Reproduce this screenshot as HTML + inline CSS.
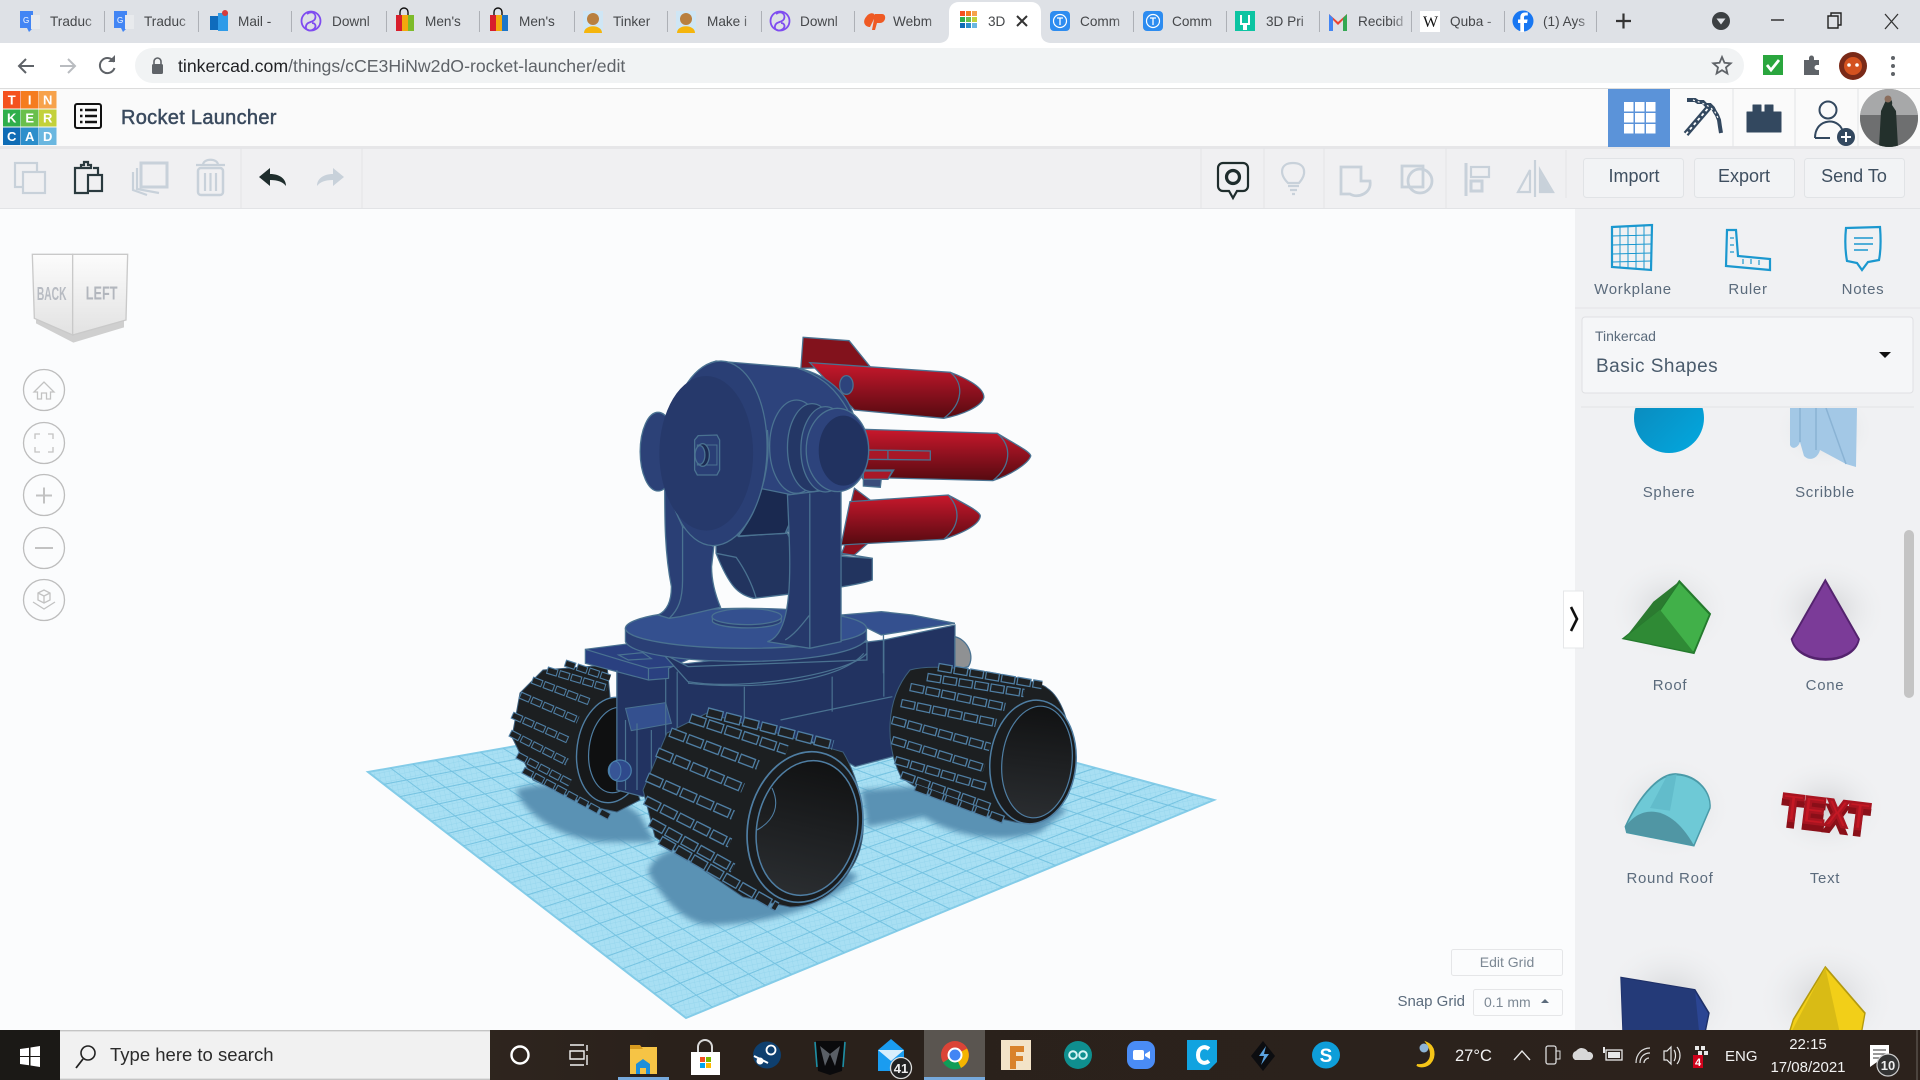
<!DOCTYPE html>
<html><head><meta charset="utf-8"><title>Rocket Launcher</title>
<style>
html,body{margin:0;padding:0;width:1920px;height:1080px;overflow:hidden;background:#fbfcfd}
svg{display:block;position:absolute;left:0;top:0}
text{font-family:"Liberation Sans",sans-serif}
.m *{vector-effect:non-scaling-stroke}
.tab{font-size:13.6px;fill:#45474a}
.lbl{font-size:15px;fill:#5b6b7c;letter-spacing:.7px;text-anchor:middle}
.btn{font-size:18px;fill:#3f4f60;text-anchor:middle}
.dis{fill:none;stroke:#c8d1da;stroke-width:2.2}
.tb{fill:none;stroke:#33485f;stroke-width:2}
.en{fill:none;stroke:#2a3a3f;stroke-width:2.2}
.tray{font-size:16.5px;fill:#f2f2f2}
.sep{stroke:#e3e4e7;stroke-width:1}
.ts{stroke:#8d9096;stroke-width:1.2}
</style></head>
<body>
<svg width="1920" height="1080" viewBox="0 0 1920 1080" xmlns="http://www.w3.org/2000/svg">
<defs>
<linearGradient id="rk" x1="0" y1="0" x2="0" y2="1"><stop offset="0" stop-color="#c9182c"/><stop offset=".5" stop-color="#8e111f"/><stop offset="1" stop-color="#560a10"/></linearGradient>
<linearGradient id="hole" x1="0" y1="0" x2="0" y2="1"><stop offset="0" stop-color="#111213"/><stop offset="1" stop-color="#2a2d30"/></linearGradient>
<linearGradient id="tbg" x1="0" y1="0" x2="1" y2="0"><stop offset="0" stop-color="#3a2f27"/><stop offset=".35" stop-color="#2a211b"/><stop offset="1" stop-color="#2c221c"/></linearGradient>
<linearGradient id="fade" x1="0" y1="0" x2="1" y2="0"><stop offset="0" stop-color="#dee1e6" stop-opacity="0"/><stop offset="1" stop-color="#dee1e6"/></linearGradient>
<radialGradient id="halo"><stop offset="0" stop-color="#b5b6b9" stop-opacity=".55"/><stop offset="1" stop-color="#f0f1f3" stop-opacity="0"/></radialGradient>
<linearGradient id="cubeL" x1="0" y1="0" x2="0" y2="1"><stop offset="0" stop-color="#fcfcfc"/><stop offset="1" stop-color="#e2e2e2"/></linearGradient>
<linearGradient id="sph" x1="0" y1="0" x2="1" y2="1"><stop offset="0" stop-color="#0c86b8"/><stop offset="1" stop-color="#02a9e0"/></linearGradient>
<clipPath id="shapes"><rect x="1575" y="408" width="345" height="622"/></clipPath>
<clipPath id="av"><circle cx="1889" cy="118" r="29"/></clipPath>
<pattern id="fine" width="5" height="5" patternUnits="userSpaceOnUse" patternTransform="rotate(-12)"><rect width="5" height="5" fill="#a8dff3"/><path d="M0 0H5M0 0V5" stroke="#92d4ec" stroke-width=".7"/></pattern>
<filter id="bl" x="-20%" y="-20%" width="140%" height="140%"><feGaussianBlur stdDeviation="3"/></filter>
<filter id="sm" x="-20%" y="-20%" width="140%" height="140%"><feGaussianBlur stdDeviation=".9"/></filter>
<path id="rl" d="M565 663L610 678M547 670L607 688M532 680L590 702M520 695L578 720M512 715L568 740M510 733L567 762M517 755L570 783M523 770L610 817"/>
<path id="rf" d="M707 712L833 745M690 718L787 750M670 732L758 765M657 752L743 788M647 777L733 815M645 800L730 843M650 822L733 868M660 840L777 907"/>
<path id="rr" d="M938 667L1042 685M927 677L1024 693M910 687L1005 707M901 703L996 723M892 720L990 747M892 740L984 768M895 760L987 787M901 775L990 807M915 787L1004 820"/>
</defs>

<!-- page regions -->
<rect width="1920" height="1080" fill="#fbfcfd"/>
<rect x="1575" y="208" width="345" height="822" fill="#f0f1f3"/>
<rect y="0" width="1920" height="43" fill="#dee1e6"/>
<rect y="43" width="1920" height="45" fill="#fff"/>
<rect x="135" y="48" width="1609" height="35" rx="17.5" fill="#f1f3f4"/>
<rect y="88" width="1920" height="1.5" fill="#dcdcdc"/>
<rect y="89" width="1920" height="59" fill="#fafafa"/>
<rect y="148" width="1920" height="60" fill="#f0f0f2"/>
<rect y="146" width="1920" height="3" fill="#e6e6e8"/>
<rect y="208" width="1920" height="1" fill="#e2e3e6"/>

<!-- tab strip: active tab -->
<path d="M938 43C946 43 949 39 949 33V12C949 6 953 2 959 2H1031C1037 2 1041 6 1041 12V33C1041 39 1044 43 1052 43Z" fill="#fff"/>
<!-- tab separators -->
<g class="ts">
<path d="M104 11V32M198 11V32M291 11V32M386 11V32M479 11V32M574 11V32M667 11V32M761 11V32M854 11V32M1133 11V32M1226 11V32M1319 11V32M1411 11V32M1504 11V32M1596 11V32"/>
</g>
<!-- tab labels -->
<text class="tab" x="50" y="26">Traduc</text>
<text class="tab" x="144" y="26">Traduc</text>
<text class="tab" x="238" y="26">Mail -</text>
<text class="tab" x="332" y="26">Downl</text>
<text class="tab" x="425" y="26">Men's</text>
<text class="tab" x="519" y="26">Men's</text>
<text class="tab" x="613" y="26">Tinker</text>
<text class="tab" x="707" y="26">Make i</text>
<text class="tab" x="800" y="26">Downl</text>
<text class="tab" x="893" y="26">Webm</text>
<text class="tab" x="988" y="26">3D</text>
<text class="tab" x="1080" y="26">Comm</text>
<text class="tab" x="1172" y="26">Comm</text>
<text class="tab" x="1266" y="26">3D Pri</text>
<text class="tab" x="1358" y="26">Recibid</text>
<text class="tab" x="1450" y="26">Quba -</text>
<text class="tab" x="1543" y="26">(1) Ays</text>
<g fill="url(#fade)">
<rect x="84" y="10" width="20" height="24"/><rect x="178" y="10" width="20" height="24"/><rect x="271" y="10" width="20" height="24"/><rect x="366" y="10" width="20" height="24"/><rect x="459" y="10" width="20" height="24"/><rect x="554" y="10" width="20" height="24"/><rect x="647" y="10" width="20" height="24"/><rect x="741" y="10" width="20" height="24"/><rect x="834" y="10" width="20" height="24"/><rect x="928" y="10" width="10" height="24"/><rect x="1113" y="10" width="20" height="24"/><rect x="1206" y="10" width="20" height="24"/><rect x="1299" y="10" width="20" height="24"/><rect x="1391" y="10" width="20" height="24"/><rect x="1484" y="10" width="20" height="24"/><rect x="1576" y="10" width="20" height="24"/>
</g>
<!-- tab icons -->
<g>
<path d="M20 11h13v17l-4 4-2-4h-7z" fill="#4285f4"/><path d="M31 15h9v14h-9z" fill="#e8eaed"/><text x="23" y="23" font-size="8" fill="#fff">G</text>
<path d="M114 11h13v17l-4 4-2-4h-7z" fill="#4285f4"/><path d="M125 15h9v14h-9z" fill="#e8eaed"/><text x="117" y="23" font-size="8" fill="#fff">G</text>
<rect x="210" y="16" width="11" height="14" fill="#0f6cbd"/><rect x="218" y="13" width="10" height="18" fill="#2f9be8"/><circle cx="225" cy="13" r="3" fill="#d83b3b"/>
<g fill="none" stroke="#7f4cf0" stroke-width="1.8"><path d="M307 14c5-4 10 0 8 5-2 4-8 2-9 7-1 4 4 6 8 3 3-3 1-6-2-6"/><circle cx="311" cy="21" r="9.5"/></g>
<g fill="none" stroke="#111" stroke-width="1.4"><path d="M400 15v-3a4 4 0 0 1 8 0v3M494 15v-3a4 4 0 0 1 8 0v3"/></g>
<rect x="396" y="15" width="6" height="16" fill="#d81e2c"/><rect x="402" y="15" width="6" height="16" fill="#f3a90e"/><rect x="408" y="15" width="6" height="16" fill="#7dbb2a"/>
<rect x="490" y="15" width="6" height="16" fill="#d81e2c"/><rect x="496" y="15" width="6" height="16" fill="#f3a90e"/><rect x="502" y="15" width="6" height="16" fill="#1d76c9"/>
<rect x="583" y="11" width="20" height="21" fill="#cfe6f5"/><circle cx="593" cy="19" r="6" fill="#b9803f"/><path d="M584 33c0-9 18-9 18 0z" fill="#f5b50d"/>
<rect x="676" y="11" width="20" height="21" fill="#cfe6f5"/><circle cx="686" cy="19" r="6" fill="#b9803f"/><path d="M677 33c0-9 18-9 18 0z" fill="#f5b50d"/>
<g fill="none" stroke="#7f4cf0" stroke-width="1.8"><path d="M776 14c5-4 10 0 8 5-2 4-8 2-9 7-1 4 4 6 8 3 3-3 1-6-2-6"/><circle cx="780" cy="21" r="9.500"/></g>
<path d="M866 17c4-6 10-4 9 0l-5 10c-5 0-8-5-4-10zM875 14h7c5 0 4 9-2 9h-3l-2 7h-3z" fill="#ef5a24"/>
<g><rect x="960" y="11" width="5" height="5" fill="#f4511e"/><rect x="966" y="11" width="5" height="5" fill="#f57c1f"/><rect x="972" y="11" width="5" height="5" fill="#f7a24b"/><rect x="960" y="17" width="5" height="5" fill="#2fae4b"/><rect x="966" y="17" width="5" height="5" fill="#6abf4b"/><rect x="972" y="17" width="5" height="5" fill="#c3d13a"/><rect x="960" y="23" width="5" height="5" fill="#0f6cb5"/><rect x="966" y="23" width="5" height="5" fill="#2c8ecb"/><rect x="972" y="23" width="5" height="5" fill="#6ab7e0"/></g>
<path d="M1017 16l10 10M1027 16l-10 10" stroke="#333" stroke-width="2"/>
<rect x="1050" y="11" width="20" height="20" rx="4" fill="#2d8cf0"/><circle cx="1060" cy="21" r="6.5" fill="none" stroke="#fff" stroke-width="1.2"/><path d="M1057 18h6M1060 18v7" stroke="#fff" stroke-width="1.3"/>
<rect x="1143" y="11" width="20" height="20" rx="4" fill="#2d8cf0"/><circle cx="1153" cy="21" r="6.5" fill="none" stroke="#fff" stroke-width="1.2"/><path d="M1150 18h6M1153 18v7" stroke="#fff" stroke-width="1.3"/>
<rect x="1235" y="11" width="20" height="20" fill="#0cc4a2"/><path d="M1241 15v9h3v6M1249 15v9h-3v6" fill="none" stroke="#fff" stroke-width="2"/>
<path d="M1329 31V14l9 8 9-8v17h-4V20l-5 5-5-5v11z" fill="#ea4335"/><path d="M1329 31h4V18l-4-4z" fill="#4285f4"/><path d="M1347 31h-4V18l4-4z" fill="#34a853"/>
<rect x="1420" y="11" width="20" height="21" fill="#fff"/><text x="1423" y="27" font-size="16" fill="#111" style="font-family:'Liberation Serif',serif">W</text>
<circle cx="1523" cy="21" r="10.5" fill="#1877f2"/><path d="M1524 32v-9h3l.6-3.5H1524v-2c0-1.200.6-2 2-2h1.800v-3h-3c-3 0-4.500 2-4.500 4.800v2.200H1518v3.500h2.300v9z" fill="#fff"/>
<path d="M1616 21h15M1623.500 13.500v15" stroke="#333" stroke-width="2.2"/>
<circle cx="1721" cy="21" r="9" fill="#3c4043"/><path d="M1716.500 18.500h9l-4.500 6z" fill="#dee1e6"/>
<path d="M1771 20h13" stroke="#333" stroke-width="1.500"/>
<path d="M1828 16h10v12h-10zM1831 16v-3h10v12h-3" fill="none" stroke="#222" stroke-width="1.400"/>
<path d="M1885 14l13 15M1898 14l-13 15" stroke="#333" stroke-width="1.300"/>
</g>

<!-- omnibar -->
<g fill="none" stroke="#5f6368" stroke-width="2">
<path d="M34 66H19M26 59l-7 7 7 7"/>
<path d="M60 66h15M68 59l7 7-7 7" stroke="#b9bcc0"/>
<path d="M114 62a7.500 7.500 0 1 0 .5 6"/>
</g>
<path d="M115 55v7h-7z" fill="#5f6368"/>
<rect x="152" y="64" width="11" height="10" rx="1.500" fill="#5f6368"/><path d="M154 64v-2.500a3.500 3.500 0 0 1 7 0V64" fill="none" stroke="#5f6368" stroke-width="1.600"/>
<text x="178" y="72" font-size="17.700" fill="#5f6368"><tspan fill="#202124">tinkercad.com</tspan>/things/cCE3HiNw2dO-rocket-launcher/edit</text>
<path d="M1722 57l2.500 5.800 6.200.5-4.700 4.100 1.400 6.100-5.400-3.300-5.400 3.300 1.400-6.100-4.700-4.100 6.200-.5z" fill="none" stroke="#5f6368" stroke-width="1.800"/>
<rect x="1763" y="55" width="20" height="20" fill="#2aa63e"/><path d="M1767 65l4 5 8-10" fill="none" stroke="#fff" stroke-width="2.800"/>
<path d="M1804 60h5v-2a2.500 2.500 0 0 1 5 0v2h5v5h-2a2.500 2.500 0 0 0 0 5h2v5h-15z" fill="#5f6368"/>
<circle cx="1853" cy="66" r="14" fill="#7a2a18"/><circle cx="1853" cy="66" r="9" fill="#d4521f"/><circle cx="1849" cy="65" r="1.800" fill="#fff"/><circle cx="1857" cy="65" r="1.800" fill="#fff"/>
<g fill="#5f6368"><circle cx="1893" cy="58" r="2"/><circle cx="1893" cy="66" r="2"/><circle cx="1893" cy="74" r="2"/></g>

<!-- Tinkercad header -->
<g font-size="13" font-weight="700" fill="#fff" text-anchor="middle">
<rect x="3" y="91" width="17.500" height="17.500" fill="#f4511e"/><text x="11.700" y="104.500">T</text>
<rect x="21" y="91" width="17.500" height="17.500" fill="#f57c1f"/><text x="29.700" y="104.500">I</text>
<rect x="39" y="91" width="17.500" height="17.500" fill="#f7a24b"/><text x="47.700" y="104.500">N</text>
<rect x="3" y="109.500" width="17.500" height="17" fill="#2fae4b"/><text x="11.700" y="122.500">K</text>
<rect x="21" y="109.500" width="17.500" height="17" fill="#6abf4b"/><text x="29.700" y="122.500">E</text>
<rect x="39" y="109.500" width="17.500" height="17" fill="#c3d13a"/><text x="47.700" y="122.500">R</text>
<rect x="3" y="127.500" width="17.500" height="17.500" fill="#0f6cb5"/><text x="11.700" y="141">C</text>
<rect x="21" y="127.500" width="17.500" height="17.500" fill="#2c8ecb"/><text x="29.700" y="141">A</text>
<rect x="39" y="127.500" width="17.500" height="17.500" fill="#6ab7e0"/><text x="47.700" y="141">D</text>
</g>
<rect x="75" y="104" width="26" height="24" rx="2" fill="none" stroke="#111" stroke-width="2"/>
<path d="M80 110h2.500M85 110h12M80 116h2.500M85 116h12M80 122h2.500M85 122h12" stroke="#111" stroke-width="2.400"/>
<text x="121" y="124" font-size="20" fill="#3a4a5e" stroke="#3a4a5e" stroke-width=".5" letter-spacing=".3">Rocket Launcher</text>

<rect x="1608" y="89" width="62" height="58" fill="#5b93d9"/>
<g fill="#fff"><rect x="1624" y="102" width="9.500" height="9.500"/><rect x="1635" y="102" width="9.500" height="9.500"/><rect x="1646" y="102" width="9.500" height="9.500"/><rect x="1624" y="113" width="9.500" height="9.500"/><rect x="1635" y="113" width="9.500" height="9.500"/><rect x="1646" y="113" width="9.500" height="9.500"/><rect x="1624" y="124" width="9.500" height="9.500"/><rect x="1635" y="124" width="9.500" height="9.500"/><rect x="1646" y="124" width="9.500" height="9.500"/></g>
<path d="M1733 89v58M1795 89v58M1858 89v58" class="sep"/>
<path d="M1686 134l24-28" stroke="#33485f" stroke-width="6"/><path d="M1686 134l24-28" stroke="#fff" stroke-width="1.800" stroke-dasharray="3 3"/>
<path d="M1687 100h8l3 2h5l3 3h4l3 3 2 4 2 3 2 5 1 7 1 6" fill="none" stroke="#33485f" stroke-width="4"/>
<path d="M1693 100l9 3 8 4 5 5 3 6" fill="none" stroke="#fff" stroke-width="1.200" stroke-dasharray="2 3"/>
<path d="M1747 112h6v-7h8v7h4v-7h8v7h8v20h-34z" fill="#33485f" stroke="#33485f" stroke-linejoin="round" stroke-width="1"/>
<circle cx="1828" cy="110" r="8.500" class="tb"/><path d="M1815 138c0-21 26-21 28-5M1815 138h15" class="tb"/>
<circle cx="1846" cy="137" r="9" fill="#33485f"/><path d="M1841 137h10M1846 132v10" stroke="#fff" stroke-width="2"/>
<circle cx="1889" cy="118" r="29" fill="#8c8d8d"/>
<g clip-path="url(#av)"><rect x="1860" y="89" width="60" height="26" fill="#a7a8a9"/><rect x="1860" y="115" width="60" height="32" fill="#6e6f70"/><path d="M1886 100c4-3 7 0 6 5l4 6 2 36h-19l2-36z" fill="#23302c"/><circle cx="1888" cy="99" r="3.500" fill="#8a6d5c"/></g>

<!-- Tool bar -->
<g class="dis">
<rect x="15" y="163" width="22" height="24"/><rect x="23" y="172" width="22" height="21" fill="#f0f0f2"/>
<rect x="141" y="163" width="26" height="24" stroke-width="3"/><path d="M137 168v21l22 4M133 172v18l14 5" />
<rect x="198" y="168" width="25" height="27" rx="3" stroke-width="2.500"/><path d="M196 165h29M203 165c0-7 15-7 15 0M205 173v18M210.500 173v18M216 173v18"/>
</g>
<g class="en">
<path d="M80 168h-5v25h14"/><path d="M93 168h5v7M81 168v-3h3v-3h4v3h3v3z"/><rect x="88" y="175" width="14" height="16"/>
</g>
<path d="M259 177l11-9v6c10 0 16 5 16 12-3-4-8-6-16-6v6z" fill="#1f2d2d"/>
<path d="M344 177l-11-9v6c-10 0-16 5-16 12 3-4 8-6 16-6v6z" fill="#c8d1da"/>
<path d="M241 148v60M362 148v60M1201 148v60M1264 148v60M1324 148v60M1446 148v60M1566 150v48" class="sep"/>
<path d="M1223 163h20a5 5 0 0 1 5 5v18a5 5 0 0 1-5 5h-6l-4 7-4-7h-6a5 5 0 0 1-5-5v-18a5 5 0 0 1 5-5z" fill="none" stroke="#1f2d2d" stroke-width="2.200"/>
<circle cx="1233" cy="177" r="6.500" fill="none" stroke="#1f2d2d" stroke-width="3.200"/>
<g class="dis">
<path d="M1288 183c-9-9-8-20 5-20s14 11 6 20zM1288 186h11M1290 190h7M1292 194h3"/>
<path d="M1341 167h20v14h9c2 12-12 18-20 13h-9z" stroke-width="2.800"/>
<rect x="1402" y="166" width="21" height="21" stroke-width="2.800"/><circle cx="1420" cy="181" r="12" stroke-width="2.800"/>
<path d="M1466 163v33" stroke-width="3"/><rect x="1471" y="167" width="18" height="10"/><rect x="1471" y="181" width="11" height="10" stroke-width="3"/>
<path d="M1535 160v37"/><path d="M1530 170l-12 22h12zM1540 170l13 22h-13z" /></g>
<path d="M1540 172l12 20h-12z" fill="#c8d1da"/>
<g fill="#f2f3f5" stroke="#e1e3e6"><rect x="1583.500" y="158.500" width="100" height="39" rx="3"/><rect x="1694.500" y="158.500" width="100" height="39" rx="3"/><rect x="1804.500" y="158.500" width="100" height="39" rx="3"/></g>
<text class="btn" x="1634" y="182">Import</text><text class="btn" x="1744" y="182">Export</text><text class="btn" x="1854" y="182">Send To</text>

<!-- nav cube -->
<g transform="translate(0,220) scale(.3333)">
<path d="M108 310L220 368 372 322 372 300 108 300z" fill="#cfcfcf"/>
<path d="M97 103H218V345L103 295z" fill="url(#cubeL)" stroke="#c9c9c9" stroke-width="4"/>
<path d="M218 103H383L378 300 218 345z" fill="url(#cubeL)" stroke="#c9c9c9" stroke-width="4"/>
<text x="155" y="240" font-size="56" font-weight="700" fill="#b7bbc2" text-anchor="middle" transform="translate(155,218) scale(.55,1) translate(-155,-218)">BACK</text>
<text x="305" y="238" font-size="56" font-weight="700" fill="#b2b6bd" text-anchor="middle" transform="translate(305,218) scale(.68,1) translate(-305,-218)">LEFT</text>
</g>
<!-- nav buttons -->
<g fill="#fbfcfd" stroke="#bdbdbd" stroke-width="1.300">
<circle cx="44" cy="390" r="20.500"/><circle cx="44" cy="443" r="20.500"/><circle cx="44" cy="495" r="20.500"/><circle cx="44" cy="548" r="20.500"/><circle cx="44" cy="600" r="20.500"/>
</g>
<g fill="none" stroke="#c2c2c2" stroke-width="1.300">
<path d="M34 392l10-10 10 10h-3.500v7H46.500v-6h-5v6h-4v-7z"/>
<path d="M35 439v-5h5M48 434h5v5M53 447v5h-5M40 452h-5v-5"/>
<path d="M36 495.500h16M44 487.500v16" stroke-width="2"/>
<path d="M35 548h18" stroke-width="2"/>
<path d="M38 593l6-3 6 3v7l-6 3-6-3zM38 593l6 3 6-3M44 596v7M33 602l11 7 11-7"/>
</g>

<!-- workplane -->
<path d="M368 772L818 693 1214 800 686 1018z" fill="url(#fine)" stroke="#84cce8" stroke-width="2"/>
<path d="M390.500 768L712.400 1007.100M413 764.100L738.800 996.200M435.500 760.200L765.200 985.300M458 756.200L791.600 974.400M480.500 752.300L818 963.500M503 748.300L844.400 952.600M525.500 744.400L870.800 941.700M548 740.400L897.200 930.800M570.500 736.500L923.600 919.900M593 732.500L950 909M615.500 728.600L976.400 898.100M638 724.600L1002.800 887.200M660.500 720.700L1029.200 876.300M683 716.700L1055.600 865.400M705.500 712.800L1082 854.500M728 708.800L1108.400 843.600M750.500 704.900L1134.800 832.700M773 700.900L1161.200 821.800M795.500 697L1187.600 810.900M383.900 784.300L837.800 698.400M399.800 796.600L857.600 703.700M415.700 808.900L877.400 709.100M431.600 821.200L897.200 714.400M447.500 833.500L917 719.800M463.400 845.800L936.800 725.100M479.300 858.100L956.600 730.500M495.200 870.400L976.400 735.800M511.100 882.700L996.200 741.200M527 895L1016 746.500M542.900 907.300L1035.800 751.900M558.800 919.600L1055.600 757.200M574.700 931.900L1075.400 762.600M590.600 944.200L1095.200 767.900M606.500 956.500L1115 773.300M622.400 968.800L1134.800 778.600M638.300 981.100L1154.600 784M654.200 993.400L1174.400 789.300M670.100 1005.700L1194.200 794.700" stroke="#76c3e1" stroke-width="1" fill="none"/>

<!-- shadows -->
<g fill="#5a92b4" filter="url(#bl)">
<path d="M516 790C560 775 610 790 640 815L655 842 600 842C560 838 525 815 516 790z"/>
<path d="M648 872C655 845 700 840 760 840L858 875C835 905 770 925 705 925 680 920 660 895 648 872z"/>
<path d="M861 790L867 827 924 817C950 835 1000 845 1040 832L1067 810 1000 780z"/>
</g>

<!-- left wheel -->
<path d="M543 670L607 665 612 717 640 800 617 812 593 807 533 780 512 737 520 693z" fill="#1c1f21" stroke="#3d5f7c"/>
<ellipse cx="612" cy="750" rx="35" ry="53" fill="#16181a" stroke="#4f7ea3" stroke-width="1.400" transform="rotate(8 612 750)"/>
<ellipse cx="616" cy="750" rx="27" ry="43" fill="#0f1011" stroke="#4f7ea3" stroke-width="1.200" transform="rotate(8 616 750)"/>
<g fill="none">
<use href="#rl" stroke="#4f7ea3" stroke-width="7.500" stroke-dasharray="11 1.500"/>
<use href="#rl" stroke="#1e2123" stroke-width="5.200" stroke-dasharray="9 3.500" stroke-dashoffset="-1"/>
</g>

<!-- base -->
<g class="m" transform="translate(350,640) scale(.574,.3333)">
<path d="M465 90L590 70 930 0 1054 -45 1054 170V300L880 380 800 300 510 470 465 450z" fill="#223361" stroke="#4a7291" stroke-width="1.200"/>
<path d="M410 28L500 8 600 50 555 85 555 115 520 120 410 70z" fill="#2a4080" stroke="#4a7291" stroke-width="1.200"/>
<path d="M410 28L520 85 520 120M520 85L570 78M468 45L510 38 525 56 485 60z" fill="none" stroke="#4a7291" stroke-width="1.200"/>
<path d="M480 205L550 188 560 250 490 272z" fill="#34508f" stroke="#4a7291" stroke-width="1"/>
<path d="M590 90V130C700 150 850 130 895 40M687 140V240M840 110V215M930 0V170M945 170L750 240M480 240V450M500 250V450M525 270V420M465 90V450M550 115V290M570 95V270" fill="none" stroke="#4a7291" stroke-width="1.200"/>
<ellipse cx="470" cy="392" rx="20" ry="32" fill="#2f4a8c" stroke="#4a7faa" stroke-width="1.200"/>
<ellipse cx="462" cy="392" rx="10" ry="28" fill="#375596" stroke="#4a7faa" stroke-width="1"/>
</g>

<!-- turret -->
<g class="m" transform="translate(350,320) scale(.4464,.3333)" stroke="#4a7291" stroke-width="1.300">
<path d="M1355 950C1385 960 1400 1010 1385 1040L1355 1050z" fill="#8f9193"/>
<path d="M1015 52L1118 62 1165 140 1010 145z" fill="#82121c"/>
<path d="M1130 505L1165 540 1120 560zM1110 670H1160L1130 705H1100z" fill="#8e111f"/>
<path d="M1030 128L1345 157C1390 180 1420 205 1420 232 1415 260 1370 285 1330 295L1130 270z" fill="url(#rk)"/>
<path d="M1345 157C1375 190 1375 250 1330 295" fill="none"/>
<path d="M1150 328L1450 340C1480 365 1525 395 1525 408 1520 430 1480 465 1440 482L1150 472z" fill="url(#rk)"/>
<path d="M1450 340C1485 380 1480 440 1440 482" fill="none"/>
<path d="M1120 545L1340 525C1375 550 1412 575 1412 588 1410 615 1370 640 1330 658L1100 675z" fill="url(#rk)"/>
<path d="M1340 525C1370 570 1365 620 1330 658" fill="none"/>
<path d="M1160 390L1300 393V420L1160 418zM1205 392V418" fill="#a81827"/>
<path d="M1130 450H1218L1205 478H1190L1188 502 1150 498V478z" fill="#3a4c7a"/>
<path d="M1150 453H1215L1205 478H1150z" fill="#a81827"/>
<!-- lower body -->
<path d="M820 640L980 640 1000 700 1170 715V780C1130 800 1000 820 905 835 870 825 850 800 820 700z" fill="#22345f"/>
<path d="M820 700L865 712C885 750 900 790 910 835M870 650L985 635M1100 700L1170 715" fill="none"/>
<!-- rear base top + turntable -->
<path d="M1100 885L1190 875 1260 885 1355 910 1190 945 1160 925z" fill="#34508f"/>
<path d="M700 1000L757 1040 1158 1020V960L1158 1000C1120 1060 880 1115 757 1085z" fill="#223361"/>
<path d="M617 925V965C640 1040 1100 1050 1157 960V925z" fill="#2a3f75"/>
<ellipse cx="887" cy="925" rx="270" ry="60" fill="#34508f"/>
<path d="M812 890V905C830 930 950 930 966 905V890z" fill="#2a3f75"/>
<ellipse cx="889" cy="890" rx="78" ry="24" fill="#34508f"/>
<path d="M1195 945V1060" fill="none"/>
<!-- left strut -->
<path d="M705 500L745 620 815 680 810 740C810 790 820 830 830 862L740 890 715 895 690 885C715 870 720 830 720 800 705 700 705 600 705 500z" fill="#2a3f75"/>
<path d="M745 620V780C745 840 735 870 715 895" fill="none"/>
<!-- drum -->
<ellipse cx="690" cy="395" rx="40" ry="118" fill="#2c4177"/>
<path d="M820 123L1000 143C1090 170 1125 250 1130 300L1100 500 975 640 870 648C800 600 740 500 735 380 735 250 770 140 820 123z" fill="#2d437c"/>
<path d="M900 500C930 560 880 620 870 648L975 640 1010 530z" fill="#1a2950"/>
<path d="M935 330C945 460 910 580 870 648" fill="none"/>
<ellipse cx="1112" cy="195" rx="15" ry="28" fill="#2d437c"/>
<path d="M1000 143C1060 170 1090 210 1115 270" fill="none"/>
<ellipse cx="822" cy="400" rx="112" ry="277" fill="#2a3f75" transform="rotate(2 822 400)"/>
<ellipse cx="798" cy="400" rx="105" ry="232" fill="#26396b" stroke="none"/>
<path d="M780 347L822 345 828 360V450L822 465H778L772 450V360z" fill="#2a3f75"/>
<path d="M778 375H822V435H778z" fill="#2a3f75" stroke-width="1"/><ellipse cx="790" cy="405" rx="15" ry="34" fill="#1c2b52"/><ellipse cx="784" cy="405" rx="11" ry="28" fill="#2d437c"/>
<!-- right strut -->
<path d="M980 525L1100 505V965L1030 985 935 965C1000 940 985 700 980 525z" fill="#26396b"/>
<path d="M1030 520V985M975 960C1000 940 1020 900 1030 885" fill="none"/>
<!-- axle -->
<ellipse cx="1000" cy="380" rx="60" ry="140" fill="#2a3f75"/>
<ellipse cx="1035" cy="383" rx="55" ry="132" fill="#243766"/>
<ellipse cx="1065" cy="388" rx="55" ry="128" fill="#2a3f75"/>
<ellipse cx="1092" cy="390" rx="70" ry="125" fill="#2d437c"/>
<ellipse cx="1105" cy="392" rx="55" ry="105" fill="#213260" stroke="none"/>
</g>

<!-- right wheel -->
<path d="M910 670C945 660 1040 680 1047 688 1077 707 1080 800 1060 803 1050 820 1030 825 1015 822 980 815 930 800 901 777 885 745 885 700 910 670z" fill="#1c1f21" stroke="#3d5f7c"/>
<ellipse cx="1033" cy="762" rx="43" ry="62" fill="#1a1c1e" stroke="#4f7ea3" stroke-width="1.500" transform="rotate(6 1033 762)"/>
<ellipse cx="1037" cy="762" rx="35" ry="56" fill="url(#hole)" stroke="#4f7ea3" stroke-width="1.200" transform="rotate(6 1037 762)"/>
<g fill="none">
<use href="#rr" stroke="#4f7ea3" stroke-width="8.500" stroke-dasharray="14.500 1.500"/>
<use href="#rr" stroke="#1e2123" stroke-width="6" stroke-dasharray="12 4" stroke-dashoffset="-1.200"/>
</g>
<!-- front wheel -->
<path d="M707 713L843 752C860 780 875 835 850 870 835 897 810 907 790 907L743 897 655 837 643 790 667 733z" fill="#1c1f21" stroke="#3d5f7c"/>
<ellipse cx="805" cy="827" rx="57" ry="76" fill="#1a1c1e" stroke="#4f7ea3" stroke-width="1.700" transform="rotate(12 805 827)"/>
<ellipse cx="807" cy="828" rx="50" ry="68" fill="url(#hole)" stroke="#4f7ea3" stroke-width="1.500" transform="rotate(12 807 828)"/>
<path d="M772 788C780 805 775 820 757 830" fill="none" stroke="#4f7ea3" stroke-width="1.100"/>
<g fill="none">
<use href="#rf" stroke="#4f7ea3" stroke-width="10" stroke-dasharray="16.500 2"/>
<use href="#rf" stroke="#1e2123" stroke-width="7.200" stroke-dasharray="14 4.500" stroke-dashoffset="-1.200"/>
</g>

<!-- Edit grid -->
<rect x="1451.500" y="949.500" width="111" height="26" rx="2" fill="#fbfcfd" stroke="#e5e6e8"/>
<text x="1507" y="967" font-size="14" fill="#7c8894" text-anchor="middle">Edit Grid</text>
<text x="1465" y="1006" font-size="15" fill="#5b6b7c" text-anchor="end">Snap Grid</text>
<rect x="1473.500" y="989.500" width="89" height="26" rx="2" fill="#fbfcfd" stroke="#e5e6e8"/>
<text x="1484" y="1007" font-size="14" fill="#7c8894">0.1 mm</text>
<path d="M1541 1003h8l-4-4z" fill="#5b6b7c"/>

<!-- right panel -->
<path d="M1575 308H1920" stroke="#e3e4e7"/>
<g fill="none" stroke="#1b98cf" stroke-width="2.200">
<path d="M1612 227L1652 225 1651 270 1612 267z"/>
<path d="M1612 236l39-1M1612 245l39-1M1612 254l39-1M1612 262l39-1M1620 226v41M1628 226v42M1636 226v42M1644 226v43" stroke-width="1"/>
<path d="M1727 230h9l2 26 32 3v11l-44-4z"/><path d="M1730 238h4M1730 245h4M1730 252h4M1743 259v5M1751 259v5M1759 260v5" stroke-width="1.200"/>
<path d="M1846 228L1880 227C1881 240 1881 250 1879 260L1868 262 1862 270 1857 263 1847 261C1845 250 1845 238 1846 228z"/>
<path d="M1854 238h19M1854 244h19M1854 250h14" stroke-width="1.400"/>
</g>
<text class="lbl" x="1633" y="294">Workplane</text>
<text class="lbl" x="1748" y="294">Ruler</text>
<text class="lbl" x="1863" y="294">Notes</text>
<rect x="1582" y="317" width="331" height="76" rx="3" fill="#f5f6f8" stroke="#dfe0e3"/>
<text x="1595" y="341" font-size="14" fill="#5b6b7c">Tinkercad</text>
<text x="1596" y="372" font-size="19" fill="#4a5b6c" letter-spacing=".5">Basic Shapes</text>
<path d="M1879 352h12l-6 6z" fill="#111"/>
<path d="M1581 407H1914" stroke="#e2e3e6"/>

<g clip-path="url(#shapes)">
<circle cx="1669" cy="418" r="35" fill="url(#sph)"/>
<ellipse cx="1825" cy="430" rx="50" ry="40" fill="url(#halo)"/>
<path d="M1790 408V445C1792 450 1798 448 1800 442L1804 456C1810 462 1818 458 1820 450L1846 464 1856 467 1857 408z" fill="#a3c8e6"/>
<path d="M1800 408V442M1816 408V450M1826 408L1846 464" stroke="#8ab3d4" stroke-width="1.500" fill="none"/>
<ellipse cx="1670" cy="610" rx="62" ry="52" fill="url(#halo)"/>
<ellipse cx="1826" cy="610" rx="62" ry="52" fill="url(#halo)"/>
<ellipse cx="1670" cy="808" rx="62" ry="52" fill="url(#halo)"/>
<ellipse cx="1826" cy="808" rx="62" ry="50" fill="url(#halo)"/>
<ellipse cx="1670" cy="1000" rx="70" ry="60" fill="url(#halo)"/>
<ellipse cx="1826" cy="1000" rx="70" ry="60" fill="url(#halo)"/>
<g transform="translate(1560,200) scale(.3333,.5357)">
<path d="M193 818L300 765 358 712 450 773 402 845z" fill="#41b049" stroke="#247a2d" stroke-width="5"/>
<path d="M193 818L300 765 402 845z" fill="#2f8a35"/>
<path d="M205 810L280 750 358 712 300 765z" fill="#2b7a30"/>
<path d="M695 820L796 710 897 820C880 870 715 870 695 820z" fill="#7b3b98" stroke="#54236e" stroke-width="5"/>
<path d="M196 1170C240 1110 300 1070 350 1072 420 1075 455 1110 450 1135L402 1205 200 1180z" fill="#6ec9d6" stroke="#4a9aa8" stroke-width="4"/>
<path d="M196 1170C240 1130 330 1125 402 1205L200 1180z" fill="#5096a4"/>
<path d="M270 1135L320 1076 350 1072 330 1140z" fill="#62bccb"/>
<path d="M183 1452L405 1475 447 1518 430 1570H190z" fill="#2b4593" stroke="#1e3068" stroke-width="4"/>
<path d="M183 1452L405 1475 420 1570H190z" fill="#243a78"/>
<path d="M796 1432L915 1518 900 1570H680L700 1530z" fill="#f2cf18" stroke="#b39a10" stroke-width="4"/>
<path d="M796 1432L845 1570H680z" fill="#d9bb15"/>
</g>
<text x="1826" y="831" font-size="38" font-weight="700" fill="#8a0f18" stroke="#8a0f18" stroke-width="3" text-anchor="middle" textLength="88" lengthAdjust="spacingAndGlyphs" transform="rotate(7 1826 810)">TEXT</text>
<text x="1826" y="825" font-size="38" font-weight="700" fill="#c41824" stroke="#a81420" stroke-width="2.500" text-anchor="middle" textLength="88" lengthAdjust="spacingAndGlyphs" transform="rotate(7 1826 810)">TEXT</text>
</g>
<text class="lbl" x="1669" y="497">Sphere</text>
<text class="lbl" x="1825" y="497">Scribble</text>
<text class="lbl" x="1670" y="690">Roof</text>
<text class="lbl" x="1825" y="690">Cone</text>
<text class="lbl" x="1670" y="883">Round Roof</text>
<text class="lbl" x="1825" y="883">Text</text>
<rect x="1904" y="530" width="10" height="168" rx="5" fill="#c4c4c4"/>
<rect x="1563.500" y="591" width="20" height="57" fill="#fff" stroke="#e6e7e9"/>
<path d="M1571 607l6 12-6 12" fill="none" stroke="#111" stroke-width="2.600"/>

<!-- taskbar -->
<rect y="1030" width="1920" height="50" fill="url(#tbg)"/>
<rect y="1030" width="60" height="50" fill="#1b1916"/>
<path d="M20 1049l9-1.300v8.300h-9zM30.500 1047.500l9.500-1.500v10h-9.500zM20 1057h9v8.300l-9-1.300zM30.500 1057h9.500v10l-9.500-1.500z" fill="#fff"/>
<rect x="60" y="1030" width="430" height="50" fill="#f1f1f1"/>
<path d="M60 1030.700H490M60 1079.300H490" stroke="#c4c4c4" stroke-width="1.400"/>
<circle cx="88" cy="1053" r="7" fill="none" stroke="#222" stroke-width="1.600"/><path d="M83 1059l-7 9" stroke="#222" stroke-width="1.800"/>
<text x="110" y="1061" font-size="18.500" fill="#2b2b2b">Type here to search</text>

<circle cx="520" cy="1055" r="8.500" fill="none" stroke="#fff" stroke-width="2.400"/>
<path d="M570 1045h14M570 1065h14M570 1051h14v8h-14zM587 1045v6M587 1055v10" fill="none" stroke="#f2f2f2" stroke-width="1.400"/>
<path d="M630 1045h9l2 2h16v27h-27z" fill="#f6c445"/><path d="M630 1045h10l3 4h-13z" fill="#d79a1f"/><path d="M636 1074v-10l7-5 7 5v10h-4v-6h-6v6z" fill="#1d8fdb"/>
<rect x="618" y="1077" width="51" height="3" fill="#76a9dc"/>
<path d="M698 1053v-6a7 7 0 0 1 14 0v6" fill="none" stroke="#d8d8d8" stroke-width="2"/><rect x="691" y="1052" width="29" height="23" fill="#fff"/><rect x="700" y="1057" width="5" height="5" fill="#f25022"/><rect x="706" y="1057" width="5" height="5" fill="#7fba00"/><rect x="700" y="1063" width="5" height="5" fill="#00a4ef"/><rect x="706" y="1063" width="5" height="5" fill="#ffb900"/>
<ellipse cx="767" cy="1055" rx="14" ry="13.500" fill="#0e3f6e"/><circle cx="771" cy="1050" r="4.500" fill="none" stroke="#fff" stroke-width="1.800"/><circle cx="760" cy="1061" r="3.500" fill="#fff"/><path d="M754 1056l14 7" stroke="#fff" stroke-width="2"/>
<path d="M816 1041h28l-2 30-12 4-12-4z" fill="#0a0a0c"/><path d="M820 1046l5 20 5-12 5 12 5-20-10 8z" fill="#5a5f66"/><path d="M815 1042l2 25M845 1042l-2 25" stroke="#1d8fa5" stroke-width="1.600"/>
<path d="M878 1050l13-11 13 11v21h-26z" fill="#1a9cf0"/><path d="M878 1050l13 11 13-11" fill="#d7eefc"/>
<circle cx="901" cy="1068" r="10.500" fill="#222" stroke="#ddd" stroke-width="1.300"/><text x="901" y="1073" font-size="13" font-weight="700" fill="#eee" text-anchor="middle">41</text>
<rect x="924" y="1030" width="61" height="50" fill="#5a5550"/>
<rect x="924" y="1077" width="61" height="3" fill="#76a9dc"/>
<circle cx="955" cy="1055" r="14" fill="#db4437"/><path d="M955 1055L943 1062.500A14 14 0 0 0 961 1068z" fill="#0f9d58"/><path d="M955 1055L967 1048.500A14 14 0 0 1 961 1068z" fill="#f4b400"/><circle cx="955" cy="1055" r="6.500" fill="#4285f4" stroke="#fff" stroke-width="2"/>
<rect x="1001" y="1040" width="30" height="30" fill="#f3e3c8"/><path d="M1010 1046h14v6h-8v4h7v5h-7v8h-6z" fill="#d9822b"/>
<ellipse cx="1078" cy="1055" rx="14" ry="14" fill="#0f8f8f"/><g fill="none" stroke="#d6f4f4" stroke-width="2"><circle cx="1073" cy="1055" r="3.800"/><circle cx="1083" cy="1055" r="3.800"/></g>
<rect x="1127" y="1041" width="28" height="28" rx="9" fill="#4a8cf5"/><rect x="1133" y="1050" width="11" height="10" rx="2" fill="#fff"/><path d="M1145 1054l5-3v8l-5-3z" fill="#fff"/>
<path d="M1187 1040h30v22l-8 8h-22z" fill="#11a3e0"/><path d="M1209 1049c-5-4-11-1-11 6s6 10 11 6" fill="none" stroke="#fff" stroke-width="4"/>
<path d="M1263 1041l-12 15 12 15 12-15z" fill="#0c0d10"/><path d="M1266 1046l-7 10h5l-3 9 8-11h-5z" fill="#5ba3e0"/>
<ellipse cx="1326" cy="1055" rx="14" ry="13.500" fill="#0e9ed9"/><text x="1326" y="1062" font-size="19" font-weight="700" fill="#fff" text-anchor="middle">S</text>
<path d="M1427 1043c7 3 9 13 3 20-4 4-10 4-13 2 9 1 14-4 14-11 0-4-2-8-4-11z" fill="#f5c518" stroke="#f5c518" stroke-width="2"/><circle cx="1424" cy="1048" r="4.500" fill="#8db4d6"/>
<text class="tray" x="1455" y="1061">27°C</text>
<path d="M1514 1060l8-9 8 9" fill="none" stroke="#e8e8e8" stroke-width="1.400"/>
<rect x="1546" y="1046" width="10" height="18" rx="2" fill="none" stroke="#ddd" stroke-width="1.300"/><rect x="1556" y="1051" width="4" height="8" fill="none" stroke="#ddd"/>
<path d="M1575 1060a5 5 0 0 1 1-9 7 7 0 0 1 12 1 4 4 0 0 1 2 8z" fill="#d8d8d8"/>
<rect x="1606" y="1050" width="16" height="10" fill="none" stroke="#e8e8e8" stroke-width="1.300"/><rect x="1608" y="1052" width="12" height="6" fill="#e8e8e8"/><path d="M1604 1047v6" stroke="#e8e8e8" stroke-width="2"/>
<path d="M1636 1063c0-9 6-15 14-15M1640 1063c0-6 4-10 10-10M1644 1063c0-3 3-5 5-5" fill="none" stroke="#e0e0e0" stroke-width="1.200"/>
<path d="M1664 1051h3l4-4v17l-4-4h-3zM1674 1050c2 3 2 8 0 11M1677 1047c4 5 4 12 0 17" fill="none" stroke="#e8e8e8" stroke-width="1.200"/>
<g fill="#e8e8e8"><rect x="1695" y="1046" width="4" height="4"/><rect x="1701" y="1046" width="4" height="4"/><rect x="1698" y="1051" width="4" height="4"/><rect x="1704" y="1051" width="4" height="4"/></g>
<rect x="1693" y="1055" width="10" height="13" fill="#d0021b"/><text x="1698" y="1066" font-size="11" font-weight="700" fill="#fff" text-anchor="middle">4</text>
<text class="tray" x="1725" y="1061" style="font-size:15px">ENG</text>
<text class="tray" x="1808" y="1049" text-anchor="middle" style="font-size:15px">22:15</text>
<text class="tray" x="1808" y="1072" text-anchor="middle" style="font-size:15px">17/08/2021</text>
<path d="M1870 1045h19v17h-12l-7 5z" fill="#fff"/><path d="M1873 1050h13M1873 1054h13M1873 1058h9" stroke="#333"/>
<circle cx="1888" cy="1065" r="11" fill="#333" stroke="#ccc" stroke-width="1.200"/><text x="1888" y="1070" font-size="13" font-weight="700" fill="#eee" text-anchor="middle">10</text>
<path d="M1917 1030v50" stroke="#6d6660"/>
</svg>
</body></html>
